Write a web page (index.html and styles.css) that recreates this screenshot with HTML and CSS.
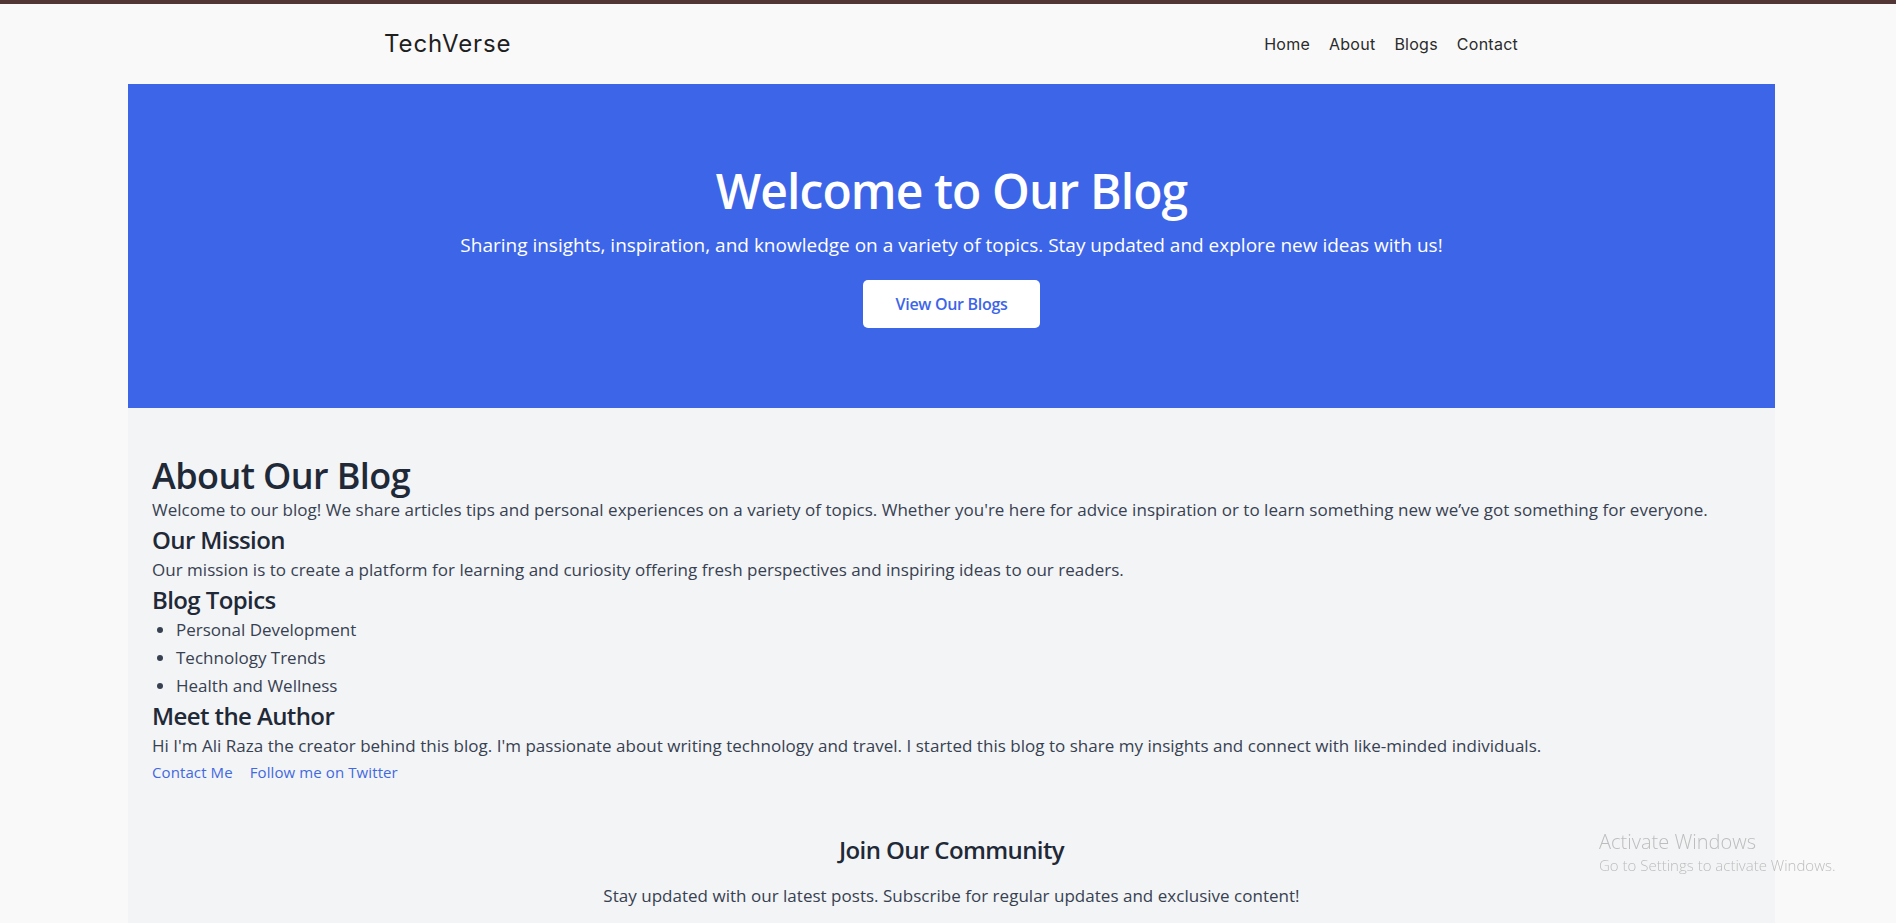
FILE: index.html
```html
<!DOCTYPE html>
<html lang="en">
<head>
<meta charset="utf-8">
<title>TechVerse</title>
<link rel="stylesheet" href="styles.css">
</head>
<body>
<div class="topbar"></div>
<header class="site-header">
  <a class="logo" href="#">TechVerse</a>
  <nav class="nav">
    <a href="#">Home</a>
    <a href="#">About</a>
    <a href="#">Blogs</a>
    <a href="#">Contact</a>
  </nav>
</header>
<main class="main">
  <section class="hero">
    <h1 class="hero-title">Welcome to Our Blog</h1>
    <p class="hero-sub">Sharing insights, inspiration, and knowledge on a variety of topics. Stay updated and explore new ideas with us!</p>
    <a class="hero-btn" href="#">View Our Blogs</a>
  </section>
  <section class="about">
    <h2 class="about-title">About Our Blog</h2>
    <p class="text">Welcome to our blog! We share articles tips and personal experiences on a variety of topics. Whether you're here for advice inspiration or to learn something new we’ve got something for everyone.</p>
    <h3 class="sub-title">Our Mission</h3>
    <p class="text">Our mission is to create a platform for learning and curiosity offering fresh perspectives and inspiring ideas to our readers.</p>
    <h3 class="sub-title">Blog Topics</h3>
    <ul class="topics">
      <li>Personal Development</li>
      <li>Technology Trends</li>
      <li>Health and Wellness</li>
    </ul>
    <h3 class="sub-title">Meet the Author</h3>
    <p class="text">Hi I'm Ali Raza the creator behind this blog. I'm passionate about writing technology and travel. I started this blog to share my insights and connect with like-minded individuals.</p>
    <div class="links">
      <a href="#">Contact Me</a>
      <a href="#">Follow me on Twitter</a>
    </div>
  </section>
  <section class="community">
    <h3 class="community-title">Join Our Community</h3>
    <p class="text">Stay updated with our latest posts. Subscribe for regular updates and exclusive content!</p>
  </section>
</main>
<div class="watermark">
  <div class="wm-title">Activate Windows</div>
  <div class="wm-sub">Go to Settings to activate Windows.</div>
</div>
</body>
</html>
```

FILE: styles.css
```css
* {
  box-sizing: border-box;
}

html, body {
  margin: 0;
  padding: 0;
}

body {
  background: #f9f9f9;
  font-family: "Open Sans", "Noto Sans", sans-serif;
  color: #374151;
  overflow: hidden;
}

a {
  text-decoration: none;
}

.topbar {
  height: 4px;
  background: #523636;
}

.site-header {
  height: 80px;
  display: flex;
  align-items: center;
  justify-content: space-between;
  padding: 0 378px 0 384px;
  font-family: Inter, "Noto Sans", sans-serif;
}

.logo {
  font-size: 24px;
  line-height: 32px;
  color: #1f1f1f;
  font-weight: 400;
  letter-spacing: 0.9px;
}

.nav {
  display: flex;
  gap: 19px;
}

.nav a {
  font-size: 16px;
  line-height: 24px;
  color: #2b2b2b;
  letter-spacing: 0.25px;
}

.main {
  margin: 0 121px 0 128px;
}

.hero {
  background: #3d65e8;
  padding: 83px 24px 80px;
  display: flex;
  flex-direction: column;
  align-items: center;
  text-align: center;
  color: #ffffff;
}

.hero-title {
  margin: 0 0 16px;
  font-size: 48px;
  line-height: 48px;
  font-weight: 600;
  letter-spacing: -0.9px;
}

.hero-sub {
  margin: 0 0 21px;
  font-size: 19px;
  line-height: 28px;
  letter-spacing: 0;
}

.hero-btn {
  display: inline-block;
  background: #ffffff;
  color: #3d65e8;
  font-size: 16px;
  line-height: 24px;
  font-weight: 600;
  padding: 12px 33px;
  border-radius: 5px;
  letter-spacing: -0.3px;
}

.about {
  background: #f3f4f6;
  padding: 48px 24px 48px;
}

.about-title {
  margin: 0;
  font-size: 36px;
  line-height: 40px;
  font-weight: 600;
  color: #1f2937;
  letter-spacing: -0.6px;
}

.sub-title {
  margin: 0;
  font-size: 24px;
  line-height: 32px;
  font-weight: 600;
  color: #1f2937;
  letter-spacing: -0.6px;
}

.text {
  margin: 0;
  font-size: 17px;
  line-height: 28px;
  color: #374151;
  letter-spacing: 0.02px;
}

.topics {
  margin: 0;
  padding-left: 24px;
  list-style: disc;
  font-size: 17px;
  line-height: 28px;
  color: #374151;
  letter-spacing: 0;
}

.links {
  display: flex;
  gap: 17px;
}

.links a {
  font-size: 15px;
  line-height: 24px;
  color: #4169e1;
  letter-spacing: 0.1px;
}

.community {
  background: #f3f4f6;
  padding: 2px 24px 48px;
  text-align: center;
}

.community-title {
  margin: 0 0 16px;
  font-size: 24px;
  line-height: 32px;
  font-weight: 600;
  color: #1f2937;
  letter-spacing: -0.6px;
}

.watermark {
  position: fixed;
  left: 1599px;
  top: 829px;
  color: #bdbdbd;
  font-family: "Open Sans", "Noto Sans", sans-serif;
  pointer-events: none;
}

.wm-title {
  font-size: 20px;
  line-height: 26px;
  font-weight: 300;
}

.wm-sub {
  font-size: 15px;
  line-height: 20px;
  font-weight: 300;
}
```
